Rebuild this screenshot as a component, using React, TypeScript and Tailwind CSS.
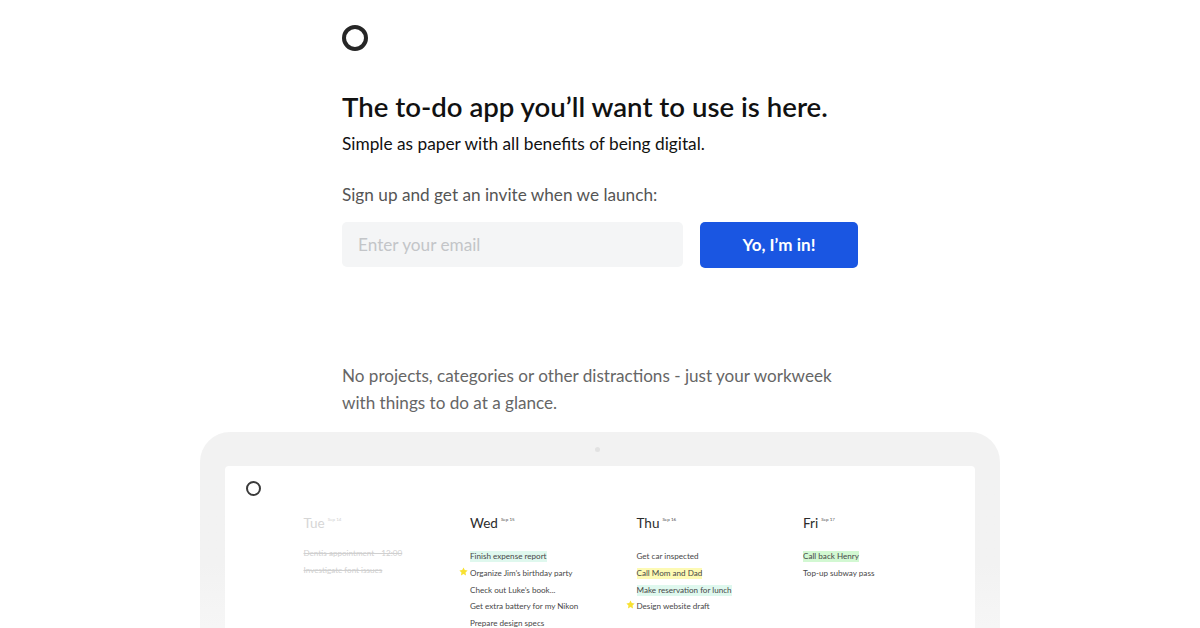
import React from 'react';

type Task = { text: string; mark?: string; star?: boolean };

const days: { name: string; date: string; done?: boolean; tasks: Task[] }[] = [
  {
    name: 'Tue',
    date: 'Sep 14',
    done: true,
    tasks: [{ text: 'Dentis appointment - 12:00' }, { text: 'Investigate font issues' }],
  },
  {
    name: 'Wed',
    date: 'Sep 15',
    tasks: [
      { text: 'Finish expense report', mark: 'bg-[#dff8ee]' },
      { text: 'Organize Jim’s birthday party', star: true },
      { text: 'Check out Luke’s book...' },
      { text: 'Get extra battery for my Nikon' },
      { text: 'Prepare design specs' },
    ],
  },
  {
    name: 'Thu',
    date: 'Sep 16',
    tasks: [
      { text: 'Get car inspected' },
      { text: 'Call Mom and Dad', mark: 'bg-[#fdfab4]' },
      { text: 'Make reservation for lunch', mark: 'bg-[#dff8ee]' },
      { text: 'Design website draft', star: true },
    ],
  },
  {
    name: 'Fri',
    date: 'Sep 17',
    tasks: [{ text: 'Call back Henry', mark: 'bg-[#d2f8d2]' }, { text: 'Top-up subway pass' }],
  },
];

const Star = () => (
  <svg viewBox="0 0 24 24" className="absolute left-[-11px] top-[2px] h-[9px] w-[9px] fill-[#f8e132]">
    <path d="M12 1l3.4 7.2 7.6 1-5.6 5.4 1.4 7.9L12 18.7l-6.8 3.8 1.4-7.9L1 9.2l7.6-1z" />
  </svg>
);

const DayColumn = ({ day }: { day: (typeof days)[number] }) => (
  <div className={`w-[166.5px] shrink-0 ${day.done ? 'text-[#d0d0d0]' : 'text-[#484848]'}`}>
    <div className="flex h-[18px] items-start">
      <span className={`text-[13.5px] leading-[18px] ${day.done ? 'text-[#d6d6d6]' : 'text-[#2b2b2b]'}`}>{day.name}</span>
      <span className="ml-[3px] mt-[2.5px] text-[4.5px] leading-[6px]">{day.date}</span>
    </div>
    <div className={`flex flex-col gap-[0.75px] ${day.done ? 'mt-[13px]' : 'mt-[16px]'}`}>
      {day.tasks.map((task) => (
        <div key={task.text} className="relative h-[16px] text-[8.1px] leading-[16px]">
          {task.star && <Star />}
          <span className={`${task.mark ?? ''} ${day.done ? 'line-through' : ''} inline-block h-[11px] leading-[11px]`}>
            {task.text}
          </span>
        </div>
      ))}
    </div>
  </div>
);

export default function App() {
  return (
    <div className="flex h-[628px] w-[1200px] flex-col overflow-hidden bg-white font-['Lato',sans-serif]">
      <main className="mx-auto w-[516px] pt-[25px]">
        <div className="h-[26px] w-[26px] rounded-full border-[4px] border-[#262626]" />
        <h1 className="mt-[38px] text-[27.6px] font-semibold leading-[36px] text-[#111111]">
          The to-do app you’ll want to use is here.
        </h1>
        <p className="mt-[6px] text-[17.3px] leading-[26px] text-[#111111]">
          Simple as paper with all benefits of being digital.
        </p>
        <p className="mt-[25px] text-[17.2px] leading-[26px] text-[#555555]">Sign up and get an invite when we launch:</p>
        <form className="mt-[14px] flex gap-[17px]">
          <input
            placeholder="Enter your email"
            className="h-[45px] w-[341px] rounded-[5px] bg-[#f4f5f6] px-[16px] text-[17.2px] outline-none placeholder:text-[#c3c5c8]"
          />
          <button type="button" className="h-[46px] w-[158px] rounded-[5px] bg-[#1a56e2] text-[17px] font-bold text-white">
            Yo, I’m in!
          </button>
        </form>
        <p className="mt-[94px] text-[17.1px] leading-[27px] text-[#666666]">
          No projects, categories or other distractions - just your workweek
          <br />
          with things to do at a glance.
        </p>
      </main>
      <section className="mx-auto mt-[16px] h-[240px] w-[800px] shrink-0 rounded-t-[30px] bg-linear-to-b from-[#f2f2f2] from-55% to-[#f9f9f9] px-[25px]">
        <div className="flex h-[34px] items-center justify-center pr-[6px]">
          <div className="mt-[1px] h-[5px] w-[5px] rounded-full bg-[#e2e2e2]" />
        </div>
        <div className="h-[206px] rounded-t-[4px] bg-white pl-[21px] pt-[15px]">
          <div className="h-[15px] w-[15px] rounded-full border-2 border-[#3a3a3a]" />
          <div className="ml-[57.5px] mt-[18px] flex">
            {days.map((day) => (
              <DayColumn key={day.name} day={day} />
            ))}
          </div>
        </div>
      </section>
    </div>
  );
}
